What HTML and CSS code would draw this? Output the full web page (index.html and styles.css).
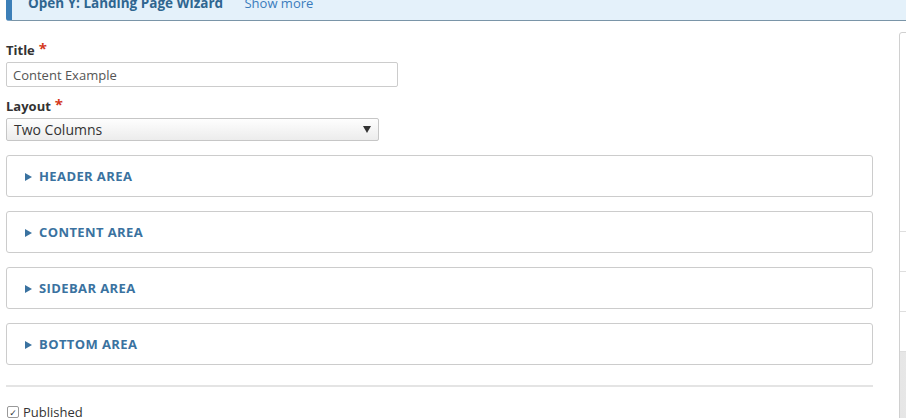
FILE: index.html
```html
<!DOCTYPE html>
<html lang="en">
<head>
  <meta charset="UTF-8" />
  <meta name="viewport" content="width=device-width, initial-scale=1.0" />
  <title>Create Landing Page</title>
  <link rel="stylesheet" href="styles.css">
</head>
<body>
  <!-- Status message -->
  <div class="messages">
    <span class="messages-title">Open Y: Landing Page Wizard</span>
    <a href="#" class="show-more">Show more</a>
  </div>

  <div class="layout">
    <!-- Main form column -->
    <div class="layout-main">
      <form class="node-form">
        <div class="form-item">
          <label for="title" class="form-required">Title</label>
          <input type="text" id="title" class="form-text" value="Content Example" />
        </div>

        <div class="form-item">
          <label for="layout" class="form-required">Layout</label>
          <div class="form-select">
            <span>Two Columns</span>
            <span class="select-arrow"></span>
          </div>
        </div>

        <details class="area">
          <summary>Header Area</summary>
        </details>
        <details class="area">
          <summary>Content Area</summary>
        </details>
        <details class="area">
          <summary>Sidebar Area</summary>
        </details>
        <details class="area">
          <summary>Bottom Area</summary>
        </details>

        <div class="form-actions">
          <label class="checkbox">
            <span class="checkbox-box">&#10003;</span>
            Published
          </label>
        </div>
      </form>
    </div>

    <!-- Secondary column (meta sidebar) -->
    <div class="layout-sidebar">
      <div class="sidebar-box">
        <div class="sidebar-head"></div>
        <div class="sidebar-row"></div>
        <div class="sidebar-row"></div>
        <div class="sidebar-row"></div>
        <div class="sidebar-foot"></div>
      </div>
    </div>
  </div>
</body>
</html>
```

FILE: styles.css
```css
/* Reset some default styles */
* {
  margin: 0;
  padding: 0;
  box-sizing: border-box;
}

html,
body {
  overflow: hidden;
  height: 100%;
}

body {
  font-family: 'Open Sans', 'DejaVu Sans', sans-serif;
  font-size: 13px;
  color: #333;
  background-color: #fff;
  padding-left: 6px;
}

/* Message bar at the top */
.messages {
  margin-top: -11px;
  width: 920px;
  padding: 5px 0 8px 16px;
  line-height: 18px;
  background-color: #e4f1fa;
  border-left: 6px solid #3c7fb8;
  border-bottom: 1px solid #7a95a8;
  border-bottom-left-radius: 3px;
}

.messages-title {
  font-size: 13.5px;
  font-weight: bold;
  color: #2f6690;
  margin-right: 18px;
}

.show-more {
  color: #3a7cbc;
  text-decoration: none;
}

/* Two column layout */
.layout {
  display: flex;
  align-items: flex-start;
}

.layout-main {
  flex: 0 0 867px;
}

.layout-sidebar {
  flex: 0 0 300px;
  margin-left: 26px;
  margin-top: 11px;
}

/* Form items */
.node-form {
  padding-top: 20px;
}

.form-item {
  margin-bottom: 10px;
}

.form-item label {
  display: block;
  font-weight: bold;
  line-height: 18px;
  margin-bottom: 3px;
}

.form-required::after {
  content: "*";
  color: #d4391d;
  margin-left: 4px;
  font-size: 15px;
  vertical-align: top;
  line-height: 14px;
}

.form-text {
  display: block;
  width: 392px;
  height: 25px;
  padding: 0 6px;
  border: 1px solid #ccc;
  border-radius: 2px;
  font-family: inherit;
  font-size: 13px;
  color: #555;
}

.form-select {
  width: 373px;
  height: 23px;
  padding: 0 7px;
  display: flex;
  align-items: center;
  justify-content: space-between;
  border: 1px solid #c6c6c6;
  border-radius: 2px;
  background: linear-gradient(#fefefe, #ececec);
  font-size: 14px;
  color: #333;
}

.select-arrow {
  width: 0;
  height: 0;
  border-left: 4px solid transparent;
  border-right: 4px solid transparent;
  border-top: 7px solid #333;
}

/* Collapsible areas */
.area {
  height: 42px;
  margin-top: 14px;
  border: 1px solid #ccc;
  border-radius: 3px;
}

.area summary {
  list-style: none;
  padding: 0 0 0 18px;
  line-height: 40px;
  font-size: 13px;
  font-weight: bold;
  letter-spacing: 0.4px;
  text-transform: uppercase;
  color: #3a72a0;
  cursor: pointer;
}

.area summary::-webkit-details-marker {
  display: none;
}

.area summary::before {
  content: "";
  display: inline-block;
  width: 0;
  height: 0;
  border-top: 4px solid transparent;
  border-bottom: 4px solid transparent;
  border-left: 7px solid #3a72a0;
  margin-right: 7px;
  vertical-align: 0;
}

/* Actions under the areas */
.form-actions {
  margin-top: 20px;
  border-top: 2px solid #e4e4e4;
  padding-top: 17px;
}

.checkbox {
  display: flex;
  align-items: center;
  gap: 4px;
  line-height: 16px;
}

.checkbox-box {
  width: 12px;
  height: 12px;
  margin-left: 1px;
  border: 1px solid #999;
  border-radius: 2px;
  font-size: 9px;
  line-height: 11px;
  text-align: center;
  color: #333;
}

/* Sidebar box */
.sidebar-box {
  border: 1px solid #d0d0d0;
  border-radius: 3px;
}

.sidebar-head {
  height: 198px;
}

.sidebar-row {
  height: 40px;
  border-top: 1px solid #dedede;
}

.sidebar-foot {
  height: 80px;
  border-top: 1px solid #dedede;
  background: linear-gradient(90deg, #e6e6e6, #f2f2f2 40%, #ececec);
}
```
